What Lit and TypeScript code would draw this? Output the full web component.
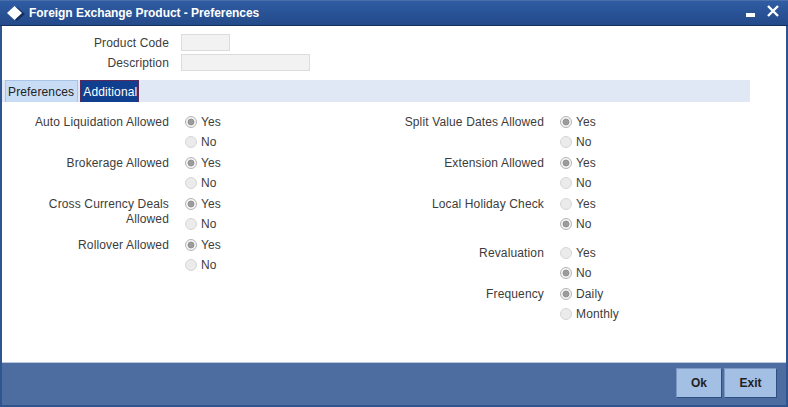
import { LitElement, html, svg, css } from "lit";
import { customElement } from "lit/decorators.js";

type Group = { label: string; options: string[]; checked: number; cls?: string };

const left: Group[] = [
  { label: "Auto Liquidation Allowed", options: ["Yes", "No"], checked: 0 },
  { label: "Brokerage Allowed", options: ["Yes", "No"], checked: 0 },
  { label: "Cross Currency Deals Allowed", options: ["Yes", "No"], checked: 0 },
  { label: "Rollover Allowed", options: ["Yes", "No"], checked: 0 },
];
const right: Group[] = [
  { label: "Split Value Dates Allowed", options: ["Yes", "No"], checked: 0 },
  { label: "Extension Allowed", options: ["Yes", "No"], checked: 0 },
  { label: "Local Holiday Check", options: ["Yes", "No"], checked: 1 },
  { label: "Revaluation", options: ["Yes", "No"], checked: 1, cls: "gap" },
  { label: "Frequency", options: ["Daily", "Monthly"], checked: 0 },
];

@customElement("app-root")
export class AppRoot extends LitElement {
  static styles = css`
    :host {
      display: block;
      width: 788px;
      height: 407px;
      font-family: "Liberation Sans", Arial, sans-serif;
      font-size: 12px;
      letter-spacing: 0.14px;
      color: #3c3c3c;
    }
    .win {
      box-sizing: border-box;
      width: 788px;
      height: 407px;
      display: flex;
      flex-direction: column;
      background: #2f5590;
      padding: 0 2px 2px;
    }
    .title {
      flex: none;
      height: 26px;
      margin: 0 -2px;
      box-sizing: border-box;
      border-top: 1px solid #4a6ea8;
      border-bottom: 1px solid #12305f;
      background: linear-gradient(#2f5ca3, #234a8a);
      display: flex;
      align-items: center;
      padding: 0 9px 0 7px;
      color: #fff;
      font-weight: bold;
      letter-spacing: -0.05px;
      gap: 4px;
    }
    .title .name { flex: 1; }
    .title svg { display: block; }
    .ctl { display: flex; align-items: flex-start; gap: 12px; align-self: flex-start; padding-top: 4px; }
    .body {
      flex: 1;
      background: #fff;
      display: flex;
      flex-direction: column;
      min-height: 0;
    }
    .head {
      display: grid;
      grid-template-columns: 167px 129px;
      column-gap: 12px;
      row-gap: 3px;
      padding-top: 8px;
      height: 46px;
      align-items: center;
      grid-auto-rows: 17px;
    }
    .head label { text-align: right; }
    .field {
      box-sizing: border-box;
      height: 17px;
      background: #f2f2f2;
      border: 1px solid #dcdcdc;
    }
    .field.short { width: 49px; }
    .tabs {
      display: flex;
      height: 22px;
      width: 748px;
      background: #e0e8f5;
      box-sizing: border-box;
      padding-left: 3px;
      gap: 2px;
    }
    .tab {
      box-sizing: border-box;
      height: 22px;
      padding: 0 3px 0 2px;
      display: flex;
      align-items: center;
      border: 1px solid #a9c3e6;
      border-bottom: none;
      background: #c9dcf5;
      color: #222;
    }
    .tab.on {
      background: #0f3f8e;
      color: #fff;
      border-color: #5a2a5a;
      padding: 0 1px 0 2px;
    }
    .cols {
      display: flex;
      padding-top: 9px;
    }
    .col.l { width: 218px; margin-right: 157px; }
    .group { display: flex; }
    .group.gap { margin-top: 8px; }
    .lab {
      box-sizing: border-box;
      flex: none;
      width: 167px;
      text-align: right;
      line-height: 15px;
      padding-top: 4px;
    }
    .col.l .lab { padding-left: 30px; }
    .opts { margin-left: 16px; display: flex; flex-direction: column; }
    .opt { display: flex; align-items: center; height: 21px; gap: 4px; }
    .opt + .opt { height: 20px; }
    .opt svg { display: block; flex: none; }
    .foot {
      flex: none;
      height: 43px;
      box-sizing: border-box;
      border-top: 1px solid #b9c8e2;
      background: #4d6ca0;
      display: flex;
      justify-content: flex-end;
      align-items: flex-start;
      padding: 5px 9px 0 0;
      gap: 2px;
    }
    .btn {
      box-sizing: border-box;
      width: 46px;
      height: 30px;
      background: #a3bfe3;
      border: 1px solid #2f4f80;
      border-top-color: #7c98c4;
      border-left-color: #7c98c4;
      font: bold 12px "Liberation Sans", Arial, sans-serif;
      color: #222;
      padding: 0;
    }
    .btn.exit { width: 53px; }
  `;

  private radio(on: boolean) {
    return html`<svg width="12" height="12" viewBox="0 0 12 12">
      <circle cx="6" cy="6" r="5.5" fill=${on ? "#f4f4f4" : "#ebebeb"} stroke=${on ? "#b4b4b4" : "#d6d6d6"} />
      ${on ? svg`<circle cx="6" cy="6" r="3" fill="#9c9c9c" stroke="#8a8a8a" stroke-width="0.8" />` : ""}
    </svg>`;
  }

  private group(g: Group) {
    return html`<div class="group ${g.cls ?? ""}">
      <div class="lab">${g.label}</div>
      <div class="opts">
        ${g.options.map(
          (o, i) => html`<div class="opt">${this.radio(i === g.checked)}<span>${o}</span></div>`
        )}
      </div>
    </div>`;
  }

  render() {
    return html`<div class="win">
      <div class="title">
        <svg width="18" height="15" viewBox="0 0 18 15"><path d="M10 1 18 8 10 15 3 8Z" fill="#12305f" /><path d="M7.5 0 15 7 7.5 14 0 7Z" fill="#fff" /></svg>
        <span class="name">Foreign Exchange Product - Preferences</span>
        <div class="ctl">
          <svg width="9" height="12" viewBox="0 0 9 12"><rect x="0" y="8" width="9" height="4" fill="#fff" /></svg>
          <svg width="12" height="12" viewBox="0 0 12 12"><path d="M1 1 11 11M11 1 1 11" stroke="#fff" stroke-width="2.4" /></svg>
        </div>
      </div>
      <div class="body">
        <div class="head">
          <label>Product Code</label><div class="field short"></div>
          <label>Description</label><div class="field"></div>
        </div>
        <div class="tabs">
          <div class="tab">Preferences</div>
          <div class="tab on">Additional</div>
        </div>
        <div class="cols">
          <div class="col l">${left.map((g) => this.group(g))}</div>
          <div class="col r">${right.map((g) => this.group(g))}</div>
        </div>
      </div>
      <div class="foot">
        <button class="btn">Ok</button>
        <button class="btn exit">Exit</button>
      </div>
    </div>`;
  }
}
